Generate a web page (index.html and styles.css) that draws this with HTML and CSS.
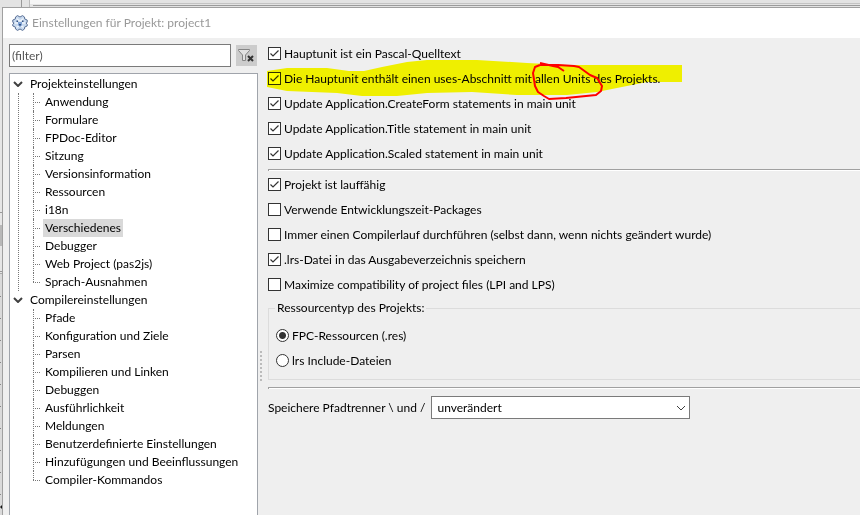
FILE: index.html
```html
<!DOCTYPE html>
<html lang="de">
<head>
<meta charset="utf-8">
<title>Einstellungen für Projekt: project1</title>
<link rel="stylesheet" href="styles.css">
</head>
<body>
<div class="backdrop" aria-hidden="true">
  <svg class="backdrop-top" height="8" width="100%">
    <rect width="100%" height="8" fill="#e3e3e3"/>
    <rect y="3" x="80" width="100%" height="1" fill="#c3c3c3"/>
    <rect y="5" x="33" width="100%" height="1" fill="#9b9b9b"/>
    <rect x="29" width="51" height="4" fill="#f5f5f5"/>
    <rect x="21" width="1" height="8" fill="#999"/>
    <rect x="29" width="1" height="8" fill="#bbb"/>
  </svg>
  <svg class="backdrop-left" width="2" height="100%">
    <rect width="2" y="0" height="8" fill="#e3e3e3"/>
    <rect width="2" y="212" height="1" fill="#999"/>
    <rect width="2" y="225" height="21" fill="#b8b8b8"/>
    <rect width="2" y="271" height="1" fill="#999"/>
    <rect width="2" y="273" height="1" fill="#aaa"/>
    <rect width="2" y="274" height="100%" fill="#dadada"/>
    <path d="M0 296.5h1M0 318.5h1M0 340.5h1M0 362.5h1M0 384.5h1M0 406.5h1M0 428.5h1M0 450.5h1M0 472.5h1M0 494.5h1" stroke="#888"/>
    <path d="M0 507l2-2v4z" fill="#111"/>
  </svg>
</div>
<main class="window">
  <header class="titlebar">
    <svg class="logo" viewBox="0 0 16 16" width="16" height="16" aria-hidden="true">
      <path d="M5.500.6 8 2 10.500.6 12.500 2l.2 2 2.500 1v2.300L14 8l1.200 1.200V11l-2.500 1-.2 2-2 1.400L8 14l-2.500 1.400-2-1.400-.2-2L.8 11V9.200L2 8 .8 7.300V5l2.500-1 .2-2z" fill="#c6d8ee" stroke="#5b7196"/>
      <path d="M4.500 3.500 8 6l3.500-2.500M3 8h10M4.500 12.500 8 10l3.500 2.500" fill="none" stroke="#eef4fb" stroke-width="1.500"/>
      <path d="M6 7h4v3.300L8 12 6 10.300z" fill="#7fa2d4"/>
      <path d="M4.500 5.500h1.500V7H4.500zM10 5.500h1.500V7H10zM7 9h2v1.500H7z" fill="#33507f"/>
    </svg>
    <h1 class="title">Einstellungen für Projekt: project1</h1>
  </header>
  <div class="body">
    <aside class="sidebar">
      <div class="filter">
        <input class="filter-input" type="text" placeholder="(filter)" aria-label="Filter">
        <button class="filter-clear" type="button" aria-label="Filter löschen">
          <svg viewBox="0 0 21 21" width="21" height="21">
            <path d="M2.500 4.500h11v1L9.500 10v5.500h-3V10l-4-4.500z" fill="#e2e2e2" stroke="#858585"/>
            <path d="m12 11 5 5m0-5-5 5" stroke="#333" stroke-width="2"/>
          </svg>
        </button>
      </div>
      <nav class="tree" aria-label="Einstellungen">
        <details class="group linked" open>
          <summary><svg class="chevron" viewBox="0 0 10 6" width="10" height="6"><path d="m1 1 4 4 4-4"/></svg>Projekteinstellungen</summary>
          <ul>
            <li><a href="#">Anwendung</a></li>
            <li><a href="#">Formulare</a></li>
            <li><a href="#">FPDoc-Editor</a></li>
            <li><a href="#">Sitzung</a></li>
            <li><a href="#">Versionsinformation</a></li>
            <li><a href="#">Ressourcen</a></li>
            <li><a href="#">i18n</a></li>
            <li><a class="selected" href="#" aria-current="page">Verschiedenes</a></li>
            <li><a href="#">Debugger</a></li>
            <li><a href="#">Web Project (pas2js)</a></li>
            <li><a href="#">Sprach-Ausnahmen</a></li>
          </ul>
        </details>
        <details class="group" open>
          <summary><svg class="chevron" viewBox="0 0 10 6" width="10" height="6"><path d="m1 1 4 4 4-4"/></svg>Compilereinstellungen</summary>
          <ul>
            <li><a href="#">Pfade</a></li>
            <li><a href="#">Konfiguration und Ziele</a></li>
            <li><a href="#">Parsen</a></li>
            <li><a href="#">Kompilieren und Linken</a></li>
            <li><a href="#">Debuggen</a></li>
            <li><a href="#">Ausführlichkeit</a></li>
            <li><a href="#">Meldungen</a></li>
            <li><a href="#">Benutzerdefinierte Einstellungen</a></li>
            <li><a href="#">Hinzufügungen und Beeinflussungen</a></li>
            <li><a href="#">Compiler-Kommandos</a></li>
          </ul>
        </details>
      </nav>
    </aside>
    <div class="splitter" aria-hidden="true"></div>
    <section class="options">
      <div class="checks">
        <label class="option"><input type="checkbox" checked>Hauptunit ist ein Pascal-Quelltext</label>
        <label class="option marked"><input type="checkbox" checked>Die Hauptunit enthält einen uses-Abschnitt mit allen Units des Projekts.
          <svg class="highlight" viewBox="0 0 416 40" width="416" height="40" aria-hidden="true">
            <path d="M0 12 20 9H60L82 12H97L115 8 140 3 160 1H210L260 4 300 6H415V23H380L355 28 330 33 300 36H250L205 33 160 34 130 37H95L70 34 20 32 0 28z"/>
          </svg>
          <svg class="pen" viewBox="0 0 76 42" width="76" height="42" aria-hidden="true">
            <path d="M10 2 23 5 28 6 34 10M10 4 5 6 3 12 5 25 8 31 14 35 19 38 36 37 66 34 71 30 72 25 67 17 60 14 49 6 44 5 28 4 10 4"/>
          </svg>
        </label>
        <label class="option"><input type="checkbox" checked>Update Application.CreateForm statements in main unit</label>
        <label class="option"><input type="checkbox" checked>Update Application.Title statement in main unit</label>
        <label class="option"><input type="checkbox" checked>Update Application.Scaled statement in main unit</label>
      </div>
      <hr>
      <div class="checks">
        <label class="option"><input type="checkbox" checked>Projekt ist lauffähig</label>
        <label class="option"><input type="checkbox">Verwende Entwicklungszeit-Packages</label>
        <label class="option"><input type="checkbox">Immer einen Compilerlauf durchführen (selbst dann, wenn nichts geändert wurde)</label>
        <label class="option"><input type="checkbox" checked>.lrs-Datei in das Ausgabeverzeichnis speichern</label>
        <label class="option"><input type="checkbox">Maximize compatibility of project files (LPI and LPS)</label>
      </div>
      <fieldset class="resources">
        <legend>Ressourcentyp des Projekts:</legend>
        <label class="option"><input type="radio" name="res" checked>FPC-Ressourcen (.res)</label>
        <label class="option"><input type="radio" name="res">lrs Include-Dateien</label>
      </fieldset>
      <hr>
      <div class="path">
        <label for="delim">Speichere Pfadtrenner \ und /</label>
        <div class="combo">
          <select id="delim"><option>unverändert</option></select>
          <svg class="chevron thin" viewBox="0 0 10 6" width="10" height="6" aria-hidden="true"><path d="m1 1 4 4 4-4"/></svg>
        </div>
      </div>
    </section>
  </div>
</main>
</body>
</html>
```
FILE: styles.css
```css
* { box-sizing: border-box; }

body {
  margin: 0;
  height: 100vh;
  padding: 7px 0 0 2px;
  overflow: hidden;
  background: #e6e6e6;
  color: #000;
  font: 12px/18px Lato, "Open Sans", sans-serif;
}

.backdrop-top, .backdrop-left { position: absolute; top: 0; left: 0; }

.window {
  position: relative;
  display: flex;
  flex-direction: column;
  height: 100%;
  border: solid #a0a0a0;
  border-width: 1px 0 0 1px;
  background: #efefef;
}

.titlebar {
  display: flex;
  align-items: center;
  gap: 4px;
  height: 30px;
  padding-left: 9px;
  background: #fff;
}

.title { margin: 0; font-size: 12px; font-weight: 400; color: #999; }

.body { display: flex; flex: 1; min-height: 0; }

.sidebar {
  display: flex;
  flex-direction: column;
  width: 255px;
  padding: 6px 0 0 6px;
}

.filter { display: flex; align-items: center; gap: 5px; padding-right: 1px; }

.filter-input {
  flex: 1;
  min-width: 0;
  height: 23px;
  padding: 0 2px;
  border: 1px solid #7a7a7a;
  background: #fff;
  font: inherit;
}
.filter-input::placeholder { color: #555; opacity: 1; }

.filter-clear {
  width: 21px;
  height: 21px;
  padding: 0;
  border: 0;
  background: #ccc;
}
.filter-clear svg { display: block; fill: none; }

.tree {
  flex: 1;
  margin-top: 6px;
  padding: 1px 0;
  border: 1px solid #a0a4ab;
  border-bottom: 0;
  background: #fff;
}

.group { position: relative; }
.group summary { display: flex; align-items: center; gap: 7px; padding-left: 3px; list-style: none; }
.group ul { margin: 0 0 0 23px; padding: 0; list-style: none; }
.group li { position: relative; height: 18px; padding-left: 10px; }

.linked::before {
  content: "";
  position: absolute;
  top: 18px;
  bottom: 0;
  left: 8px;
  border-left: 1px dotted #777;
}
.group li::before {
  content: "";
  position: absolute;
  top: 0;
  bottom: 0;
  left: 0;
  border-left: 1px dotted #777;
}
.group li:last-child::before { bottom: 9px; }
.group li::after {
  content: "";
  position: absolute;
  top: 9px;
  left: 0;
  width: 7px;
  border-top: 1px dotted #777;
}

.tree a { display: inline-block; padding: 0 2px; color: inherit; text-decoration: none; }
.tree a.selected { background: #d9d9d9; }

.chevron { fill: none; stroke: #404040; stroke-width: 2; }
.chevron.thin { stroke-width: 1; }

.splitter {
  align-self: flex-start;
  width: 3px;
  height: 30px;
  margin: 313px 4px 0 2px;
  background: radial-gradient(circle at 1px 1px, #bbb 1px, transparent 1px) 0 0 / 3px 4px;
}

.options { flex: 1; min-width: 0; padding: 3px 0 0 1px; }

.option { display: flex; align-items: center; gap: 3px; height: 25px; white-space: nowrap; }

input[type="checkbox"], input[type="radio"] {
  appearance: none;
  flex: none;
  width: 13px;
  height: 13px;
  margin: 0;
  border: 1px solid #333;
  background: #fff;
}
input[type="checkbox"]:checked {
  background: #fff url("data:image/svg+xml,%3Csvg xmlns='http://www.w3.org/2000/svg' viewBox='0 0 11 11'%3E%3Cpath d='M1.500 5.500 4 8l5.500-5.500' fill='none' stroke='%23333' stroke-width='1.200'/%3E%3C/svg%3E");
}
input[type="radio"] { border-radius: 50%; }
input[type="radio"]:checked { background: radial-gradient(circle, #333 3px, #fff 4px); }

.marked { position: relative; }
.highlight, .pen { position: absolute; pointer-events: none; }
.highlight { top: -7px; left: -1px; fill: #ff0; mix-blend-mode: multiply; }
.pen { top: -5px; left: 262px; fill: none; stroke: #f00; stroke-width: 2; stroke-linejoin: round; }

hr { height: 2px; margin: 3px 0 1px; border: solid #a0a0a0; border-width: 1px 0 0 1px; background: #fff; }

.resources { margin: 2px 0 7px; padding: 6px 8px; border: 1px solid #dcdcdc; border-width: 1px 0 1px 1px; }
.resources legend { margin-left: -2px; padding: 0 2px; }
.resources .option { margin-left: -1px; }

.path { display: flex; align-items: center; gap: 6px; margin-top: 7px; }
.combo { position: relative; width: 259px; }
.combo select {
  display: block;
  appearance: none;
  width: 100%;
  height: 23px;
  padding: 0 5px;
  border: 1px solid #7a7a7a;
  border-radius: 0;
  background: #fff;
  color: inherit;
  font: inherit;
}
.combo .chevron { position: absolute; top: 9px; right: 4px; pointer-events: none; }
```
